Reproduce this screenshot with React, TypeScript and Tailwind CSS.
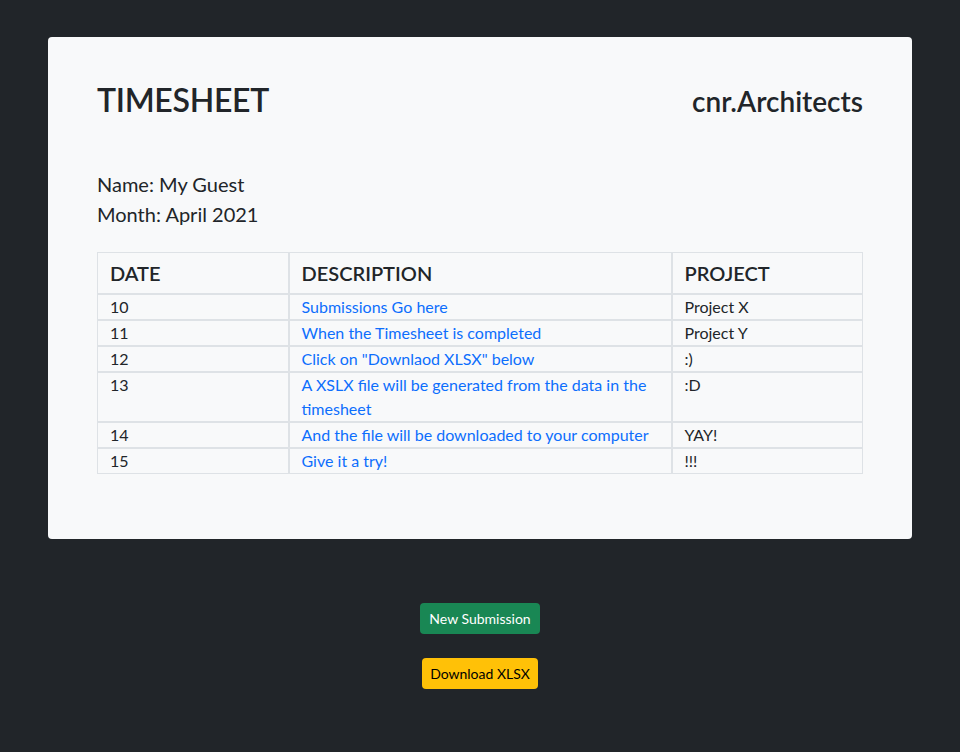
import React from "react";

const rows = [
  { date: "10", desc: "Submissions Go here", project: "Project X" },
  { date: "11", desc: "When the Timesheet is completed", project: "Project Y" },
  { date: "12", desc: 'Click on "Downlaod XLSX" below', project: ":)" },
  { date: "13", desc: "A XSLX file will be generated from the data in the timesheet", project: ":D" },
  { date: "14", desc: "And the file will be downloaded to your computer", project: "YAY!" },
  { date: "15", desc: "Give it a try!", project: "!!!" },
];

export default function App() {
  return (
    <div
      className="min-h-[752px] bg-[#212529] pt-[37px] pb-10 text-[#212529]"
      style={{ fontFamily: '"Segoe UI", Lato, "Noto Sans", sans-serif' }}
    >
      {/* Card */}
      <div className="mx-auto w-[90%] rounded bg-[#f8f9fa] px-[49px] pt-[44px] pb-[65px]">
        <div className="flex items-baseline justify-between">
          <h1 className="text-[32px] font-semibold leading-[1.2] tracking-[-0.3px]">TIMESHEET</h1>
          <h3 className="text-[28px] font-semibold leading-[1.2]">cnr.Architects</h3>
        </div>

        <div className="mt-[50px] text-[20px] leading-[30px]">
          <p>Name: My Guest</p>
          <p>Month: April 2021</p>
        </div>

        <table className="mt-[23px] w-full table-fixed border-separate border-spacing-0">
          <colgroup>
            <col className="w-1/4" />
            <col className="w-1/2" />
            <col className="w-1/4" />
          </colgroup>
          <thead>
            <tr>
              {["DATE", "DESCRIPTION", "PROJECT"].map((h) => (
                <th
                  key={h}
                  className="border border-[#dee2e6] px-3 py-[5px] text-left text-[20px] font-semibold leading-[30px]"
                >
                  {h}
                </th>
              ))}
            </tr>
          </thead>
          <tbody className="text-[16px] leading-[24px]">
            {rows.map((r) => (
              <tr key={r.date}>
                <td className="border border-[#dee2e6] px-3 align-top">{r.date}</td>
                <td className="border border-[#dee2e6] px-3 align-top text-[#0d6efd]">{r.desc}</td>
                <td className="border border-[#dee2e6] px-3 align-top">{r.project}</td>
              </tr>
            ))}
          </tbody>
        </table>
      </div>

      {/* Actions */}
      <div className="mt-[64px] flex flex-col items-center gap-6">
        <button className="rounded bg-[#198754] px-[9px] py-1 text-[14px] leading-[23px] text-white">
          New Submission
        </button>
        <button className="rounded bg-[#ffc107] px-2 py-1 text-[14px] leading-[23px] text-black">
          Download XLSX
        </button>
      </div>
    </div>
  );
}
